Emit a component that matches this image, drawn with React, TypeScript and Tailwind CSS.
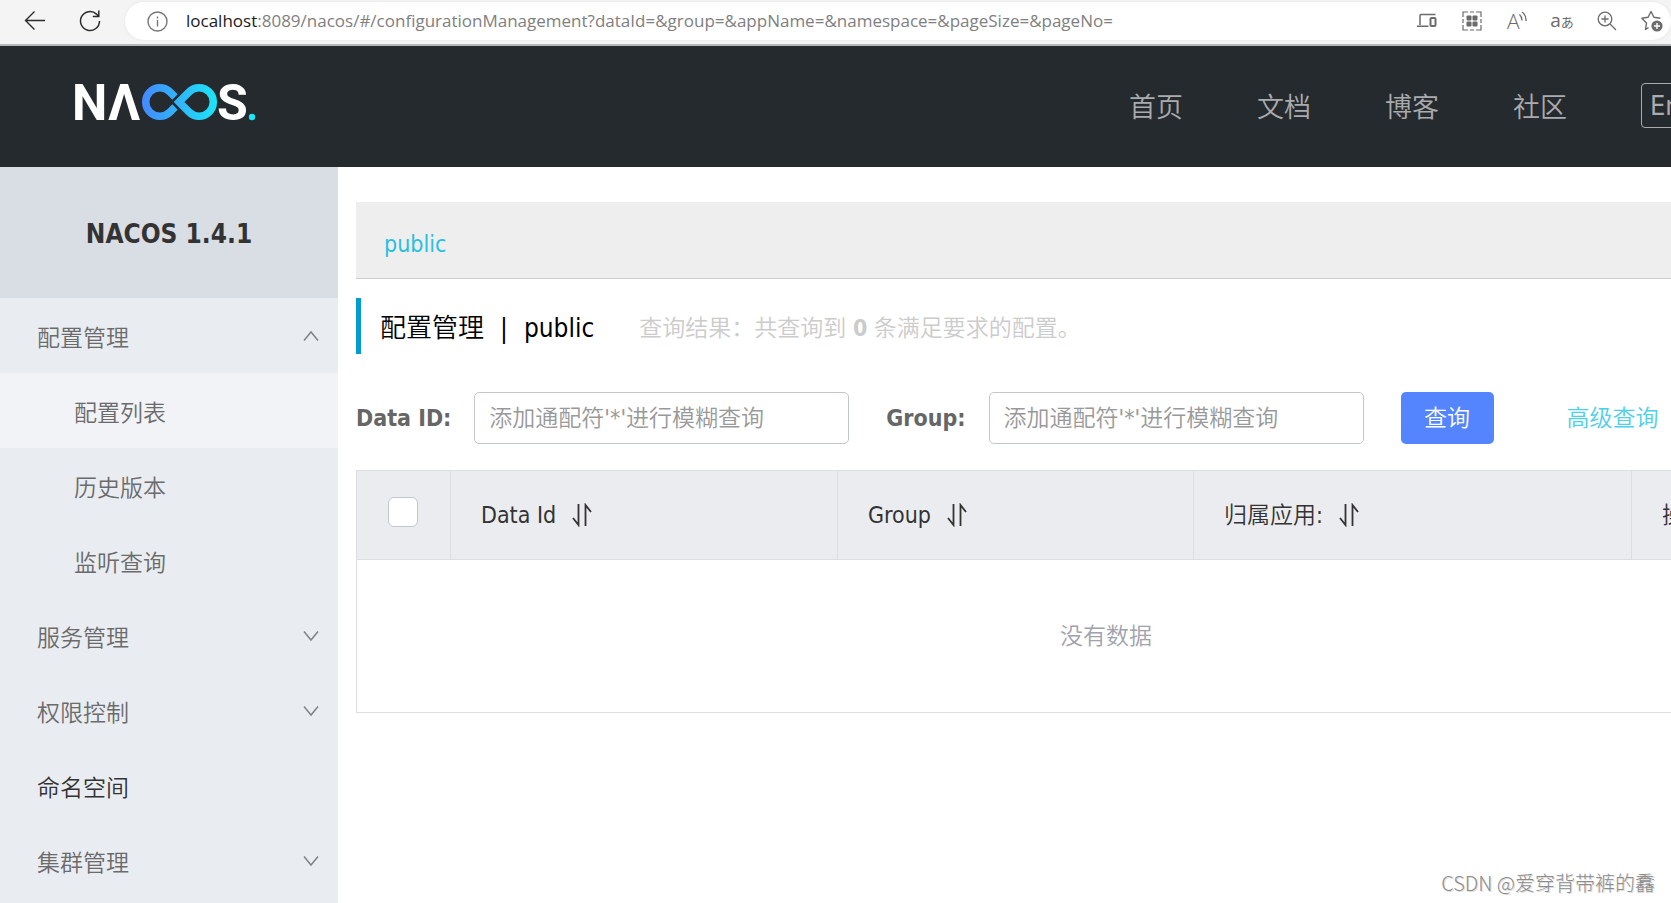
import type { ReactNode } from "react";
import { clsx } from "clsx";

interface MenuItem {
  label: string;
  level: 1 | 2;
  arrow?: "up" | "down";
  active?: boolean;
  strong?: boolean;
}

const MENU: MenuItem[] = [
  { label: "配置管理", level: 1, arrow: "up" },
  { label: "配置列表", level: 2, active: true },
  { label: "历史版本", level: 2 },
  { label: "监听查询", level: 2 },
  { label: "服务管理", level: 1, arrow: "down" },
  { label: "权限控制", level: 1, arrow: "down" },
  { label: "命名空间", level: 1, strong: true },
  { label: "集群管理", level: 1, arrow: "down" },
];

const NAV = ["首页", "文档", "博客", "社区"];

const PLACEHOLDER = "添加通配符'*'进行模糊查询";

function NacosLogo() {
  return (
    <svg width="184" height="40" viewBox="0 0 184 40" role="img" aria-label="NACOS" className="overflow-visible">
      <defs>
        <linearGradient id="loop" gradientUnits="userSpaceOnUse" x1="67" y1="0" x2="142" y2="0">
          <stop offset="0" stopColor="#4489ff" />
          <stop offset="1" stopColor="#1be5f7" />
        </linearGradient>
      </defs>
      <g fill="#fff" fontFamily="Roboto, sans-serif" fontWeight="700" fontSize="50">
        <text x="-3" y="36">N</text>
        <text x="33" y="36">Λ</text>
        <text x="142" y="36">S</text>
      </g>
      <g fill="none" stroke="url(#loop)" strokeWidth="7.5">
        <path d="M100 13 L95 8 A14.2 14.2 0 1 0 95 28 L100 23" />
        <path d="M104 18 L114 8 A14.2 14.2 0 1 1 114 28 Z" />
      </g>
      <circle cx="177" cy="33" r="3.2" fill="#1be5f7" />
    </svg>
  );
}

function ToolButton({ label, children }: { label: string; children: ReactNode }) {
  return (
    <button type="button" aria-label={label} className="flex h-6 w-6 shrink-0 items-center justify-center text-[#6b6b6b]">
      {children}
    </button>
  );
}

function BrowserBar() {
  return (
    <div className="flex h-[46px] items-start border-b-2 border-[#b5b7b8] bg-[#f4f4f4] pt-[2px]">
      <div className="flex h-[38px] w-[125px] shrink-0 items-center gap-[31px] pl-[23px] text-[#2b2b2b]">
        <button type="button" aria-label="Back">
          <svg width="24" height="24" viewBox="0 0 24 24" fill="none" stroke="currentColor" strokeWidth="1.4">
            <path d="M22 11.5H3M11.5 2.5l-9 9 9 9" />
          </svg>
        </button>
        <button type="button" aria-label="Reload">
          <svg width="24" height="24" viewBox="0 0 24 24" fill="none" stroke="currentColor" strokeWidth="1.5">
            <path d="M21.5 12A9.5 9.5 0 1 1 18.5 5.1L20.5 7.2M20.8 1.5v6h-6" />
          </svg>
        </button>
      </div>
      <div className="flex h-[38px] min-w-0 flex-1 items-center rounded-full bg-white pr-[7px] pl-[21px] shadow-[0_0_3px_#e2e2e2]">
        <svg width="23" height="23" viewBox="0 0 23 23" fill="none" stroke="#767676" strokeWidth="1.4" className="shrink-0">
          <circle cx="11.5" cy="11.5" r="9.5" />
          <path d="M11.5 10v6.5M11.5 6.5v2" />
        </svg>
        <div className="ml-[17px] min-w-0 flex-1 font-['Open_Sans',sans-serif] text-[17px] leading-6 font-normal whitespace-nowrap text-[#808080]">
          <span className="text-[#1b1b1b]">localhost</span>
          :8089/nacos/#/configurationManagement?dataId=&amp;group=&amp;appName=&amp;namespace=&amp;pageSize=&amp;pageNo=
        </div>
        <div className="flex items-center gap-[21px]">
          <ToolButton label="Send to devices">
            <svg width="22" height="22" viewBox="0 0 22 22" fill="none" stroke="currentColor" strokeWidth="1.5">
              <path d="M4 15V5.5q0-1 1-1h14.5M1 16.2h11.5" />
              <rect x="14.5" y="8" width="5" height="8" rx="1" strokeWidth="2" />
            </svg>
          </ToolButton>
          <ToolButton label="QR code">
            <svg width="22" height="22" viewBox="0 0 22 22" fill="none" stroke="currentColor" strokeWidth="1.2">
              <path d="M2 7V2h5M9 2h4M15 2h5v5M20 9v4M20 15v5h-5M13 20H9M7 20H2v-5M2 13V9" />
              <g fill="currentColor" stroke="none">
                <rect x="5.5" y="5.5" width="5" height="5" rx="1" />
                <rect x="11.5" y="5.5" width="5" height="5" rx="1" />
                <rect x="5.5" y="11.5" width="5" height="5" rx="1" />
                <rect x="11.5" y="11.5" width="5" height="5" rx="1" />
              </g>
            </svg>
          </ToolButton>
          <ToolButton label="Read aloud">
            <svg width="22" height="22" viewBox="0 0 22 22" fill="none" stroke="currentColor" strokeWidth="1.3" className="overflow-visible">
              <text x="1" y="19" fill="currentColor" stroke="none" fontFamily="Open Sans, sans-serif" fontWeight="300" fontSize="21">A</text>
              <path d="M13.5 4.5q2.5 2.2 2.5 6M16 2q4.5 3.5 4 9" />
            </svg>
          </ToolButton>
          <ToolButton label="Translate">
            <span className="font-['Open_Sans','Noto_Sans_CJK_JP',sans-serif] text-[19px] leading-5 font-normal whitespace-nowrap">
              a<span className="text-[13px]">あ</span>
            </span>
          </ToolButton>
          <ToolButton label="Zoom">
            <svg width="22" height="22" viewBox="0 0 22 22" fill="none" stroke="currentColor" strokeWidth="1.3">
              <circle cx="9" cy="9" r="6.8" />
              <path d="M14 14l6 6M9 5.5v7M5.5 9h7" />
            </svg>
          </ToolButton>
          <ToolButton label="Add to favorites">
            <svg width="24" height="24" viewBox="0 0 24 24" fill="none" stroke="currentColor" strokeWidth="1.4">
              <path d="M8.5 18.5L5.5 20.5l1-6.5L1.8 9.3l6.3-1L11 2.5l2.9 5.8 6.5 1" strokeLinejoin="round" />
              <circle cx="17" cy="17" r="5.6" fill="currentColor" stroke="none" />
              <path d="M17 14v6M14 17h6" stroke="#fff" />
            </svg>
          </ToolButton>
        </div>
      </div>
    </div>
  );
}

function Header() {
  return (
    <header className="flex h-[121px] shrink-0 items-start overflow-hidden bg-[#252a2f] pl-[75px]">
      <a href="#home" className="mt-[38px]">
        <NacosLogo />
      </a>
      <nav className="mt-[37px] -mr-[38px] ml-auto flex items-start gap-[74px] text-[27px] text-[#a9abad]">
        {NAV.map((label) => (
          <a key={label} href={`#${label}`} className="leading-[50px]">
            {label}
          </a>
        ))}
        <button type="button" className="h-[45px] w-[68px] rounded-sm border border-[#a9abad] pl-2 text-left leading-10">
          En
        </button>
      </nav>
    </header>
  );
}

function Chevron({ up }: { up?: boolean }) {
  return (
    <svg width="16" height="12" viewBox="0 0 16 12" fill="none" stroke="#808285" strokeWidth="1.5">
      <path d={up ? "M1 10.5L8 2l7 8.5" : "M1 1.5L8 10l7-8.5"} />
    </svg>
  );
}

function Sidebar() {
  return (
    <aside className="w-[338px] shrink-0 bg-[#e9edf2]">
      <h1 className="h-[131px] bg-[#d9dde4] text-center text-[26px] leading-[134px] font-bold text-[#333]">
        NACOS 1.4.1
      </h1>
      <ul>
        {MENU.map((item) => (
          <li key={item.label}>
            <a
              href={`#${item.label}`}
              className={clsx(
                "flex h-[75px] items-center justify-between pr-[19px]",
                item.level === 1 ? "pl-[37px]" : "pl-[74px]",
                item.active && "bg-[#f1f3f7]",
                item.strong ? "text-[#333]" : "text-[#6b6b6b]",
              )}
            >
              <span className="pt-[5px]">{item.label}</span>
              {item.arrow && <Chevron up={item.arrow === "up"} />}
            </a>
          </li>
        ))}
      </ul>
    </aside>
  );
}

function SearchField({ id, label }: { id: string; label: string }) {
  return (
    <>
      <label htmlFor={id} className="font-bold text-[#666]">
        {label}
      </label>
      <input
        id={id}
        type="text"
        placeholder={PLACEHOLDER}
        className="mr-[37px] ml-[23px] h-[52px] w-[375px] rounded-[5px] border border-[#c4c6cf] px-[14px] outline-none placeholder:text-[#999]"
      />
    </>
  );
}

function SortHeader({ label }: { label: string }) {
  return (
    <th scope="col" className="border-l border-[#dcdee3] pl-[30px] text-left font-[350]">
      <button type="button" className="flex items-center gap-4">
        {label}
        <svg width="20" height="24" viewBox="0 0 20 24" fill="none" stroke="#333" strokeWidth="1.8">
          <path d="M6.5 1v21L1 15M13.5 23V2l5.5 7" />
        </svg>
      </button>
    </th>
  );
}

function ConfigTable() {
  return (
    <table className="mt-[26px] w-full table-fixed border-collapse border border-[#dcdee3]">
      <colgroup>
        <col className="w-[94px]" />
        <col className="w-[387px]" />
        <col className="w-[356px]" />
        <col className="w-[438px]" />
        <col />
      </colgroup>
      <thead className="bg-[#ebecf0] text-[#333]">
        <tr className="h-[89px] border-b border-[#dcdee3]">
          <th scope="col" className="pb-[6px] pl-[31px] text-left">
            <input
              type="checkbox"
              aria-label="全选"
              className="block size-[30px] appearance-none rounded-md border border-[#c4c6cf] bg-white"
            />
          </th>
          <SortHeader label="Data Id" />
          <SortHeader label="Group" />
          <SortHeader label="归属应用:" />
          <th scope="col" className="border-l border-[#dcdee3] pl-[30px] text-left font-[350]">
            操作
          </th>
        </tr>
      </thead>
      <tbody>
        <tr className="h-[153px]">
          <td colSpan={5} className="text-center text-[#a0a2ad]">
            没有数据
          </td>
        </tr>
      </tbody>
    </table>
  );
}

export default function App() {
  return (
    <div className="relative flex min-h-screen flex-col overflow-hidden bg-white font-['DejaVu_Sans_Condensed','Noto_Sans_CJK_SC',sans-serif] text-[23px] leading-8 font-[350]">
      <BrowserBar />
      <Header />
      <div className="flex flex-1">
        <Sidebar />
        {/* The console is wider than the window and runs off its right edge */}
        <main className="-mr-[185px] min-w-0 flex-1 pt-[35px] pl-[18px]">
          <div className="h-[77px] border-b border-[#ccc] bg-[#eee] pt-[26px] pl-[28px]">
            <a href="#public" className="text-[#29bfe0]">
              public
            </a>
          </div>
          <div className="mt-[19px] flex h-14 items-center border-l-[5px] border-[#009dd1] pt-1 pl-[19px] whitespace-nowrap">
            <h2 className="flex gap-4 text-[26px] text-black">
              <span>配置管理</span>
              <span>|</span>
              <span>public</span>
            </h2>
            <p className="ml-[45px] text-[#ccc]">
              查询结果：共查询到 <strong className="font-bold">0</strong> 条满足要求的配置。
            </p>
          </div>
          <form className="mt-[38px] flex items-center whitespace-nowrap">
            <SearchField id="data-id" label="Data ID:" />
            <SearchField id="group" label="Group:" />
            <button type="button" className="h-[52px] w-[93px] rounded-[5px] bg-[#5584ff] text-white">
              查询
            </button>
            <a href="#advanced" className="ml-[73px] text-[#4dd0ea]">
              高级查询
            </a>
          </form>
          <ConfigTable />
        </main>
      </div>
      <div className="absolute right-4 bottom-1 font-['Noto_Sans_CJK_SC',sans-serif] text-[20px] font-light text-[#8c8c8c] [text-shadow:1px_1px_0_#ddd]">
        CSDN @爱穿背带裤的馫
      </div>
    </div>
  );
}
